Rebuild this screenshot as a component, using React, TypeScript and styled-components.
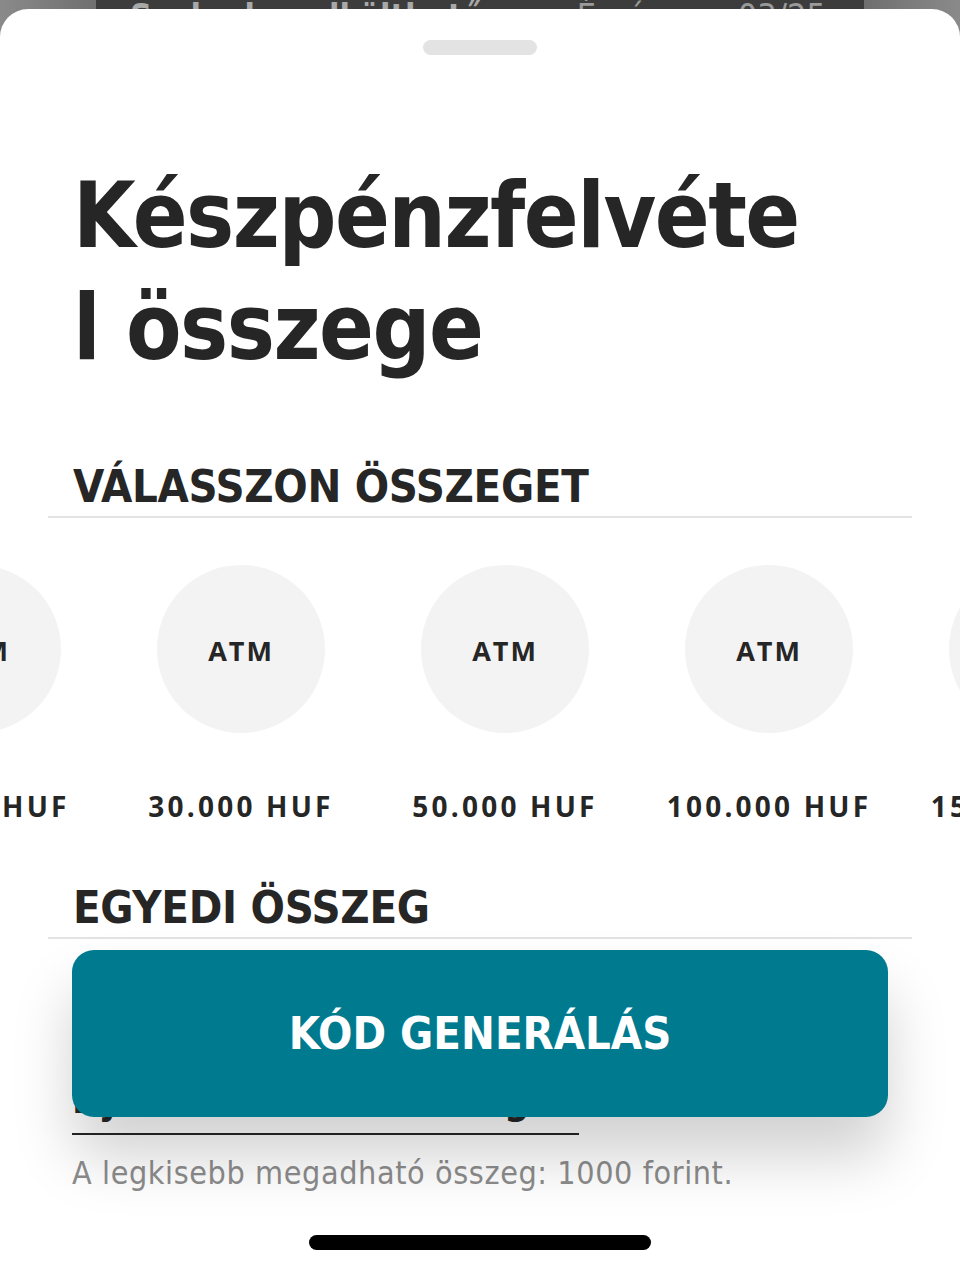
import React from "react";
import styled, { createGlobalStyle } from "styled-components";

const COND = `"DejaVu Sans Condensed", "DejaVu Sans", sans-serif`;

const Global = createGlobalStyle`
  html, body { margin: 0; padding: 0; }
  body { background: #7b7b7b; font-family: ${COND}; }
  #root { width: 960px; height: 1274px; overflow: hidden; }
`;

const Screen = styled.div`
  width: 960px;
  height: 1274px;
  display: flex;
  flex-direction: column;
  background: linear-gradient(90deg, #8a8a8a 0%, #6f6f6f 10%, #6f6f6f 90%, #8a8a8a 100%);
`;

const Backdrop = styled.div`
  height: 9px;
  overflow: hidden;
  display: flex;
  justify-content: center;
`;

const BehindCard = styled.div`
  width: 768px;
  height: 40px;
  background: #3c3c3c;
  display: flex;
  justify-content: space-between;
  padding: 0 38px 0 34px;
  box-sizing: border-box;
  margin-top: -4px;
`;

const BehindText = styled.span<{ $light?: boolean }>`
  font-family: ${COND};
  font-size: 34px;
  line-height: 40px;
  font-weight: ${(p) => (p.$light ? 300 : 700)};
  color: ${(p) => (p.$light ? "#9a9a9a" : "#a8a8a8")};
`;

const Sheet = styled.div`
  flex: 1;
  position: relative;
  background: #ffffff;
  border-radius: 28px 28px 0 0;
  display: flex;
  flex-direction: column;
  overflow: hidden;
`;

const Handle = styled.div`
  align-self: center;
  width: 114px;
  height: 15px;
  border-radius: 8px;
  background: #e3e3e3;
  margin-top: 31px;
`;

const Title = styled.h1`
  margin: 105px 0 0 73px;
  width: 745px;
  font-family: ${COND};
  font-weight: 700;
  font-size: 90px;
  line-height: 112px;
  letter-spacing: -1.5px;
  color: #262626;
  word-break: break-all;
`;

const SectionHeader = styled.div<{ $top: number }>`
  margin: ${(p) => p.$top}px 48px 0 48px;
  padding: 0 0 1px 25px;
  border-bottom: 2px solid #e3e3e3;
  font-family: ${COND};
  font-weight: 700;
  font-size: 45px;
  line-height: 56px;
  letter-spacing: -0.3px;
  color: #262626;
`;

const Track = styled.div`
  display: flex;
  margin: 47px 0 0 -155px;
`;

const Option = styled.div`
  flex: 0 0 264px;
  display: flex;
  flex-direction: column;
  align-items: center;
`;

const Circle = styled.div`
  width: 168px;
  height: 168px;
  border-radius: 50%;
  background: #f3f3f3;
  display: flex;
  align-items: center;
  justify-content: center;
  font-family: "Open Sans", sans-serif;
  font-weight: 700;
  font-size: 27px;
  letter-spacing: 2px;
  color: #262626;
  padding-top: 3px;
  box-sizing: border-box;
`;

const Amount = styled.div`
  margin-top: 53px;
  font-family: "Open Sans", sans-serif;
  font-weight: 700;
  font-size: 28px;
  line-height: 40px;
  letter-spacing: 3.2px;
  color: #262626;
  white-space: nowrap;
`;

const InputBlock = styled.div`
  margin: 138px 72px 0 72px;
  display: flex;
  flex-direction: column;
`;

const InputValue = styled.div`
  width: 507px;
  padding-bottom: 12px;
  border-bottom: 2px solid #262626;
  font-family: ${COND};
  font-weight: 700;
  font-size: 40px;
  line-height: 44px;
  color: #262626;
  white-space: nowrap;
`;

const Helper = styled.div`
  margin-top: 18px;
  font-family: ${COND};
  font-weight: 300;
  font-size: 32px;
  line-height: 40px;
  letter-spacing: 0.6px;
  color: #8c8c8c;
`;

const GenerateButton = styled.button`
  position: absolute;
  left: 72px;
  top: 941px;
  width: 816px;
  height: 167px;
  border: none;
  border-radius: 22px;
  background: #007a8f;
  color: #ffffff;
  font-family: ${COND};
  font-weight: 700;
  font-size: 45px;
  letter-spacing: 0;
  box-shadow: 0 40px 60px rgba(0, 0, 0, 0.18);
  cursor: pointer;
`;

const HomeIndicator = styled.div`
  position: absolute;
  left: 309px;
  bottom: 24px;
  width: 342px;
  height: 15px;
  border-radius: 8px;
  background: #000000;
`;

const amounts = ["20.000 HUF", "30.000 HUF", "50.000 HUF", "100.000 HUF", "150.000 HUF"];

export default function App() {
  return (
    <>
      <Global />
      <Screen>
        <Backdrop>
          <BehindCard>
            <BehindText>Szabadon elkölthető</BehindText>
            <BehindText $light>Érvényes: 03/25</BehindText>
          </BehindCard>
        </Backdrop>
        <Sheet>
          <Handle />
          <Title>Készpénzfelvétel összege</Title>
          <SectionHeader $top={75}>VÁLASSZON ÖSSZEGET</SectionHeader>
          <Track>
            {amounts.map((a) => (
              <Option key={a}>
                <Circle>ATM</Circle>
                <Amount>{a}</Amount>
              </Option>
            ))}
          </Track>
          <SectionHeader $top={54}>EGYEDI ÖSSZEG</SectionHeader>
          <InputBlock>
            <InputValue>Írja be a kívánt összeget</InputValue>
            <Helper>A legkisebb megadható összeg: 1000 forint.</Helper>
          </InputBlock>
          <GenerateButton>KÓD GENERÁLÁS</GenerateButton>
          <HomeIndicator />
        </Sheet>
      </Screen>
    </>
  );
}
